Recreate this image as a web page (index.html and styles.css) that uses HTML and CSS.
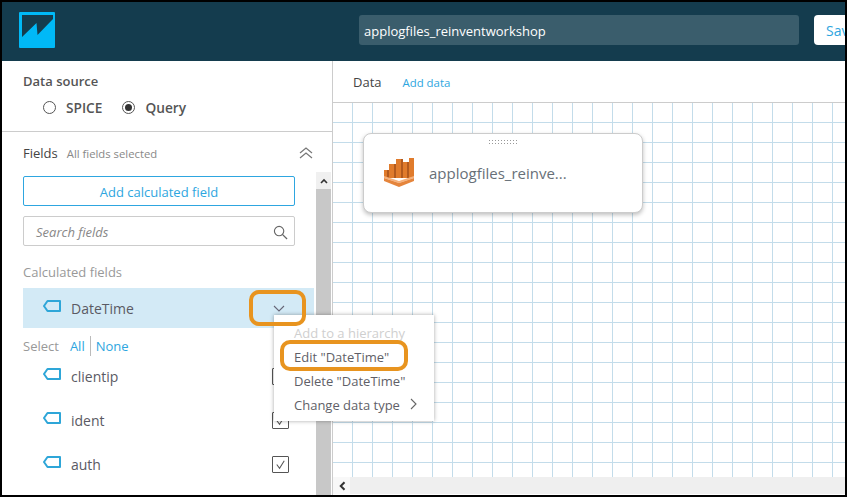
FILE: index.html
```html
<!DOCTYPE html>
<html lang="en">
<head>
    <meta charset="UTF-8">
    <title>QuickSight data prep</title>
    <link rel="stylesheet" href="styles.css">
</head>
<body>

<div class="frame">
    <header class="topbar">
        <svg class="logo" viewBox="0 0 36 36">
            <path fill="#00b9f7" fill-rule="evenodd" d="M1 0H35Q36 0 36 1V35Q36 36 35 36H1Q0 36 0 35V1Q0 0 1 0ZM3 3V25L17.5 11L18.5 23L34 7V3Z"/>
        </svg>
        <div class="name-box">applogfiles_reinventworkshop</div>
        <div class="save-btn">Save</div>
    </header>

    <div class="main">
        <aside class="sidebar">
            <section class="source">
                <h3>Data source</h3>
                <div class="radios">
                    <span class="radio"></span><b>SPICE</b>
                    <span class="radio on"></span><b>Query</b>
                </div>
            </section>

            <section class="fields">
                <div class="fields-head">
                    <span class="fields-title">Fields</span>
                    <span class="fields-note">All fields selected</span>
                    <svg class="collapse" viewBox="0 0 14 12">
                        <path d="M1 6L7 1L13 6M1 11L7 6L13 11" fill="none" stroke="#777" stroke-width="1.2"/>
                    </svg>
                </div>
                <div class="fields-body">
                    <div class="fields-list">
                        <button class="add-btn">Add calculated field</button>
                        <div class="search">
                            <span>Search fields</span>
                            <svg viewBox="0 0 16 16">
                                <circle cx="6.5" cy="6.5" r="5" fill="none" stroke="#666" stroke-width="1.2"/>
                                <path d="M10 10L15 15" stroke="#666" stroke-width="1.4"/>
                            </svg>
                        </div>
                        <div class="group-label">Calculated fields</div>
                        <div class="field-row active">
                            <svg class="tag" viewBox="0 0 18 12"><path d="M1 6L4.5 1H17V11H4.5Z"/></svg>
                            <span>DateTime</span>
                            <svg class="chev" viewBox="0 0 12 7"><path d="M1 1L6 6L11 1" fill="none" stroke="#667" stroke-width="1.1"/></svg>
                        </div>
                        <div class="select-line">
                            <span class="select-word">Select</span>
                            <a>All</a><i></i><a>None</a>
                        </div>
                        <div class="field-row">
                            <svg class="tag" viewBox="0 0 18 12"><path d="M1 6L4.5 1H17V11H4.5Z"/></svg>
                            <span>clientip</span>
                            <span class="check"><svg viewBox="0 0 16 16"><path d="M4 8L7 12L12 4" fill="none" stroke="#555" stroke-width="1.1"/></svg></span>
                        </div>
                        <div class="field-row">
                            <svg class="tag" viewBox="0 0 18 12"><path d="M1 6L4.5 1H17V11H4.5Z"/></svg>
                            <span>ident</span>
                            <span class="check"><svg viewBox="0 0 16 16"><path d="M4 8L7 12L12 4" fill="none" stroke="#555" stroke-width="1.1"/></svg></span>
                        </div>
                        <div class="field-row">
                            <svg class="tag" viewBox="0 0 18 12"><path d="M1 6L4.5 1H17V11H4.5Z"/></svg>
                            <span>auth</span>
                            <span class="check"><svg viewBox="0 0 16 16"><path d="M4 8L7 12L12 4" fill="none" stroke="#555" stroke-width="1.1"/></svg></span>
                        </div>
                    </div>
                    <div class="vscroll">
                        <div class="vscroll-up"><svg viewBox="0 0 8 6"><path d="M1 5L4 2L7 5" fill="none" stroke="#333" stroke-width="1.6"/></svg></div>
                        <div class="vscroll-thumb"></div>
                    </div>
                </div>
            </section>
        </aside>

        <div class="workspace">
            <div class="tabs">
                <span class="tab">Data</span>
                <a class="tab-link">Add data</a>
            </div>
            <div class="canvas">
                <div class="card">
                    <div class="grip"></div>
                    <svg class="athena" viewBox="0 0 30 29">
                        <path fill="#e07b2c" d="M0 12H3V20H0ZM5 6H10V20H5ZM12 1H17V20H12ZM19 4H23V20H19ZM25 0H30V20H25Z"/>
                        <path fill="#b25a1e" d="M3 12H5V20H3ZM10 6H12V20H10ZM17 1H19V20H17ZM23 4H25V20H23Z"/>
                        <path fill="#f6b07a" d="M0 18L15 23L30 18V20L15 25L0 20Z"/>
                        <path fill="#e5853c" d="M0 20L15 25L30 20V23L15 29L0 23Z"/>
                    </svg>
                    <span class="card-name">applogfiles_reinve...</span>
                </div>
            </div>
            <div class="hscroll">
                <div class="hscroll-left"><svg viewBox="0 0 6 8"><path d="M5 1L2 4L5 7" fill="none" stroke="#333" stroke-width="1.6"/></svg></div>
            </div>
        </div>
    </div>

    <ul class="menu">
        <li class="disabled">Add to a hierarchy</li>
        <li>Edit "DateTime"</li>
        <li>Delete "DateTime"</li>
        <li>Change data type
            <svg viewBox="0 0 7 12"><path d="M1 1L6 6L1 11" fill="none" stroke="#666" stroke-width="1.1"/></svg>
        </li>
    </ul>

    <div class="mark mark-chev"></div>
    <div class="mark mark-edit"></div>
</div>

</body>
</html>
```

FILE: styles.css
```css
* {
    box-sizing: border-box;
}

html, body {
    margin: 0;
    padding: 0;
}

.frame {
    position: relative;
    display: flex;
    flex-direction: column;
    width: 847px;
    height: 497px;
    overflow: hidden;
    border: 2px solid #000;
    background: #fff;
    font-family: "Open Sans", sans-serif;
    font-size: 14px;
    color: #555;
}

.topbar {
    display: flex;
    align-items: center;
    flex: none;
    height: 59px;
    padding: 0 0 3px 17px;
    background: #143c4e;
}

.logo {
    flex: none;
    width: 36px;
    height: 36px;
}

.name-box {
    flex: none;
    width: 440px;
    height: 30px;
    margin-left: 304px;
    padding-left: 5px;
    border-radius: 3px;
    background: #3a5d6c;
    color: #fff;
    font-size: 13px;
    line-height: 32px;
}

.save-btn {
    flex: none;
    width: 70px;
    height: 30px;
    margin-left: 15px;
    padding-left: 12px;
    border-radius: 4px;
    background: #fff;
    color: #2ea6e0;
    line-height: 32px;
}

.main {
    display: flex;
    flex: 1;
    min-height: 0;
}

.sidebar {
    flex: none;
    width: 331px;
    border-right: 1px solid #ccc;
}

.source {
    height: 71px;
    padding: 11px 0 0 21px;
    border-bottom: 1px solid #ccc;
}

.source h3 {
    margin: 0;
    font-size: 13px;
    line-height: 18px;
    font-weight: 600;
}

.radios {
    display: flex;
    align-items: center;
    height: 18px;
    margin-top: 8px;
    padding-left: 20px;
    font-size: 13.7px;
}

.radios b {
    margin-left: 10px;
    margin-right: 20px;
    font-weight: 600;
}

.radio {
    position: relative;
    width: 13px;
    height: 13px;
    border: 1px solid #555;
    border-radius: 50%;
}

.radio.on::after {
    content: "";
    position: absolute;
    left: 2px;
    top: 2px;
    width: 7px;
    height: 7px;
    border-radius: 50%;
    background: #333;
}

.fields-head {
    display: flex;
    align-items: center;
    height: 40px;
    padding: 2px 19px 0 21px;
}

.fields-title {
    font-size: 13px;
    color: #444;
}

.fields-note {
    margin-left: 9px;
    font-size: 11.3px;
    color: #888;
}

.collapse {
    width: 14px;
    height: 12px;
    margin-left: auto;
}

.fields-body {
    display: flex;
    height: 323px;
    overflow: hidden;
}

.fields-list {
    flex: none;
    width: 312px;
    padding: 4px 0 0 21px;
}

.add-btn {
    display: block;
    width: 272px;
    height: 30px;
    padding-top: 3px;
    border: 1px solid #2ea6e0;
    border-radius: 2px;
    background: #fff;
    color: #2ea6e0;
    font-family: inherit;
    font-size: 13px;
}

.search {
    display: flex;
    align-items: center;
    justify-content: space-between;
    width: 272px;
    height: 30px;
    margin-top: 10px;
    padding: 2px 6px 0 12px;
    border: 1px solid #ccc;
    border-radius: 2px;
    color: #888;
    font-size: 13px;
    font-style: italic;
}

.search svg {
    width: 15px;
    height: 15px;
}

.group-label {
    margin-top: 17px;
    font-size: 13px;
    line-height: 18px;
    color: #999;
}

.field-row {
    display: flex;
    align-items: center;
    height: 44px;
    padding-left: 20px;
    padding-right: 25px;
    color: #5a5a64;
}

.field-row span:first-of-type {
    margin-left: 10px;
}

.field-row.active {
    height: 40px;
    margin-top: 7px;
    background: #d3eaf6;
}

.tag {
    flex: none;
    width: 18px;
    height: 12px;
    margin-top: -4px;
}

.tag path {
    fill: none;
    stroke: #2ea6d8;
    stroke-width: 2;
    stroke-linejoin: round;
}

.chev {
    width: 12px;
    height: 7px;
    margin-left: auto;
    margin-right: 4px;
}

.check {
    width: 17px;
    height: 17px;
    margin-left: auto !important;
    border: 1px solid #555;
    border-radius: 1px;
}

.check svg {
    display: block;
    width: 15px;
    height: 15px;
}

.select-line {
    display: flex;
    align-items: center;
    height: 26px;
    margin-top: 5px;
    margin-bottom: -5px;
    font-size: 13px;
}

.select-word {
    margin-right: 11px;
    color: #999;
}

.select-line a {
    color: #2ea6e0;
}

.select-line i {
    width: 1px;
    height: 20px;
    margin: 0 5px;
    background: #bbb;
}

.vscroll {
    flex: none;
    width: 15px;
    margin-left: 2px;
    background: #c8c8c8;
}

.vscroll-up {
    display: flex;
    align-items: center;
    justify-content: center;
    height: 17px;
    background: #f0f0f0;
}

.vscroll-up svg {
    width: 8px;
    height: 6px;
}

.workspace {
    display: flex;
    flex-direction: column;
    flex: 1;
    min-width: 0;
}

.tabs {
    flex: none;
    display: flex;
    align-items: center;
    height: 42px;
    padding: 0 0 0 20px;
    border-bottom: 1px solid #ccc;
}

.tab {
    font-size: 13px;
    color: #444;
}

.tab-link {
    margin-left: 21px;
    margin-top: 2px;
    font-size: 11.4px;
    color: #2ea6e0;
}

.canvas {
    position: relative;
    flex: 1;
    min-height: 0;
    background-color: #fff;
    background-image:
        linear-gradient(to right, #c3dcea 1px, transparent 1px),
        linear-gradient(to bottom, #c3dcea 1px, transparent 1px);
    background-size: 20px 20px;
    background-position: 19px 19px;
}

.card {
    position: absolute;
    left: 30px;
    top: 30px;
    display: flex;
    align-items: center;
    width: 280px;
    height: 80px;
    padding-left: 20px;
    border: 1px solid #ccc;
    border-radius: 8px;
    background: #fff;
    box-shadow: 0 2px 4px rgba(0, 0, 0, 0.25);
}

.grip {
    position: absolute;
    left: 124px;
    top: 5px;
    width: 30px;
    height: 6px;
    background-image: radial-gradient(#999 1px, transparent 1px);
    background-size: 3px 3px;
}

.athena {
    flex: none;
    width: 30px;
    height: 29px;
    margin-top: -2px;
}

.card-name {
    margin-left: 15px;
    font-size: 15px;
    color: #687078;
}

.hscroll {
    flex: none;
    height: 17px;
    margin-bottom: 1px;
    background: #efefef;
}

.hscroll-left {
    display: flex;
    align-items: center;
    justify-content: center;
    width: 17px;
    height: 17px;
    background: #f8f8f8;
}

.hscroll-left svg {
    width: 8px;
    height: 10px;
}

/* context menu and the orange marks drawn over the shot */
.menu {
    position: absolute;
    left: 272px;
    top: 313px;
    width: 160px;
    height: 106px;
    margin: 0;
    padding: 6px 0 0 20px;
    list-style: none;
    background: #fff;
    box-shadow: 0 0 4px rgba(0, 0, 0, 0.35);
    font-size: 13px;
    color: #5f5f68;
}

.menu li {
    display: flex;
    align-items: center;
    height: 24px;
}

.menu li svg {
    width: 7px;
    height: 12px;
    margin-left: 10px;
    margin-top: -2px;
}

.menu .disabled {
    color: #cfcfcf;
}

.mark {
    position: absolute;
    border: 4px solid #e8941f;
    border-radius: 10px;
}

.mark-chev {
    left: 247px;
    top: 288px;
    width: 57px;
    height: 36px;
}

.mark-edit {
    left: 278px;
    top: 338px;
    width: 128px;
    height: 31px;
}
```
